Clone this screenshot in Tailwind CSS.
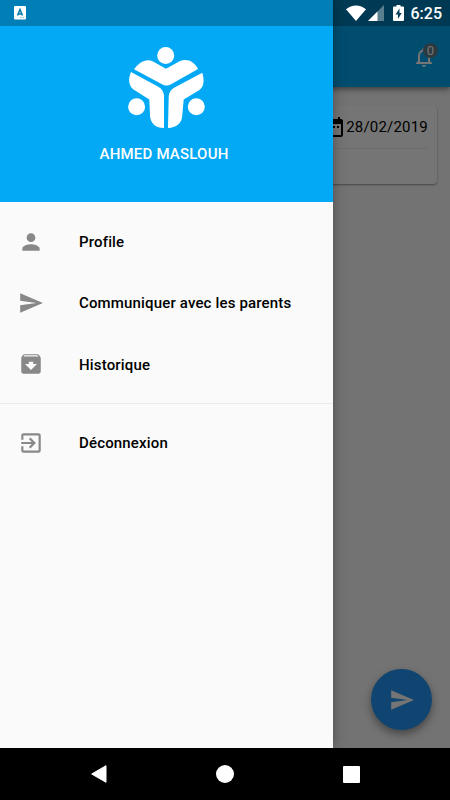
<!DOCTYPE html>
<html lang="fr">
<head>
<meta charset="utf-8">
<title>Menu</title>
<script src="https://cdn.jsdelivr.net/npm/@tailwindcss/browser@4"></script>
</head>
<body class="font-['Roboto',sans-serif]">
<div class="relative flex h-[800px] w-[450px] flex-col overflow-hidden bg-[#fafafa]">
  <!-- Home screen -->
  <header class="relative flex h-[87px] shrink-0 items-end justify-end bg-[#03a9f4] pr-[14px] pb-[18px] shadow-[0_2px_6px_rgba(0,0,0,0.5)]">
    <div class="relative size-6">
      <svg class="size-6" viewBox="0 0 24 24" fill="#fff"><path d="M12 22c1.1 0 2-.9 2-2h-4c0 1.1.9 2 2 2zm6-6v-5c0-3.07-1.63-5.64-4.5-6.32V4c0-.83-.67-1.5-1.5-1.5s-1.500.67-1.500 1.500v.68C7.640 5.360 6 7.920 6 11v5l-2 2v1h16v-1l-2-2zm-2 1H8v-6c0-2.480 1.510-4.500 4-4.500s4 2.020 4 4.500v6z"/></svg>
      <span class="absolute top-[-2px] left-[11px] flex size-[15px] items-center justify-center rounded-full bg-[#607d8b] text-[13px] leading-none text-white">0</span>
    </div>
  </header>
  <main class="flex-1 pt-[19px] pr-[13px] pl-[13px]">
    <div class="h-[78px] rounded-[4px] bg-white px-[9px] shadow-[0_1px_2px_rgba(0,0,0,0.4)]">
      <div class="flex h-[43px] items-center justify-end border-b border-[#eeeeee]">
        <svg class="size-6" viewBox="0 0 24 24" fill="#000"><path d="M9 11H7v2h2v-2zm4 0h-2v2h2v-2zm4 0h-2v2h2v-2zm2-7h-1V2h-2v2H8V2H6v2H5c-1.110 0-1.990.9-1.990 2L3 20c0 1.100.89 2 2 2h14c1.100 0 2-.9 2-2V6c0-1.100-.9-2-2-2zm0 16H5V9h14v11z"/></svg>
        <span class="pt-px text-[15px] tracking-[0.2px] text-black">28/02/2019</span>
      </div>
    </div>
  </main>
  <div class="absolute top-[669px] left-[371px] flex size-[61px] items-center justify-center rounded-full bg-[#2196f3] shadow-[0_4px_9px_rgba(0,0,0,0.4)]">
    <svg class="size-[26px]" viewBox="0 0 24 24" fill="#fff"><path d="M2.010 21L23 12 2.010 3 2 10l15 2-15 2z"/></svg>
  </div>

  <!-- Scrim -->
  <div class="absolute inset-0 bg-black/54"></div>

  <!-- Drawer -->
  <aside class="absolute top-0 left-0 flex h-[748px] w-[333px] flex-col bg-[#fafafa] shadow-[0_0_12px_rgba(0,0,0,0.35)]">
    <div class="flex h-[202px] flex-col items-center bg-[#03a9f4] pt-[46px] pr-[5px]">
      <svg class="h-[84px] w-[84px]" viewBox="-2 0 84 84" fill="#fff">
        <circle cx="41.700" cy="9.500" r="8.500"/>
        <circle cx="12.600" cy="60.800" r="8.500"/>
        <circle cx="72.300" cy="60.800" r="8.500"/>
        <path d="M10 23.300C15 16.500 22 12 29 15.500L42 22.700 56 15C63 12 70.500 15.500 74 22.900L47.500 38Q42.500 41 37.500 38Z"/>
        <path d="M7 26L34.300 40.700Q40 44 40 50.500V82C32 82 26 77.500 26 69L25.300 53.500 9.500 43.500C4.500 39.500 4 33 7 26Z"/>
        <path d="M78.300 26.700L51 41.300Q44.700 44.500 44.700 51L44 82C52 82 58.300 77 58.300 69L59.700 53.500 75.500 44C80 40.500 80.500 34 78.300 26.700Z"/>
      </svg>
      <div class="mt-[14px] text-[15px] leading-[20px] font-medium tracking-[0.2px] text-white">AHMED MASLOUH</div>
    </div>
    <nav class="flex flex-col pt-[9px] text-[15px] font-medium tracking-[0.16px] text-black">
      <a class="flex h-[61px] items-center gap-[35px] pl-[18px]">
        <svg class="size-[26px]" viewBox="0 0 24 24" fill="#888"><path d="M12 12c2.210 0 4-1.790 4-4s-1.790-4-4-4-4 1.790-4 4 1.790 4 4 4zm0 2c-2.670 0-8 1.340-8 4v2h16v-2c0-2.660-5.330-4-8-4z"/></svg>
        <span class="pt-0.5">Profile</span>
      </a>
      <a class="flex h-[61px] items-center gap-[35px] pl-[18px]">
        <svg class="size-[26px]" viewBox="0 0 24 24" fill="#888"><path d="M2.010 21L23 12 2.010 3 2 10l15 2-15 2z"/></svg>
        <span class="pt-0.5">Communiquer avec les parents</span>
      </a>
      <a class="flex h-[62px] items-center gap-[35px] pl-[18px]">
        <svg class="size-[26px]" viewBox="0 0 24 24" fill="#888"><path d="M20.540 5.230l-1.390-1.680C18.880 3.210 18.470 3 18 3H6c-.47 0-.88.21-1.160.55L3.460 5.230C3.170 5.570 3 6.020 3 6.500V19c0 1.100.9 2 2 2h14c1.100 0 2-.9 2-2V6.500c0-.48-.17-.93-.46-1.270zM12 17.500L6.500 12H10v-2h4v2h3.500L12 17.500zM5.120 5l.81-1h12l.94 1H5.120z"/></svg>
        <span class="pt-0.5">Historique</span>
      </a>
      <div class="mt-[8px] mb-[8px] h-px bg-[#ebebeb]"></div>
      <a class="flex h-[61px] items-center gap-[35px] pl-[18px]">
        <svg class="size-[26px]" viewBox="0 0 24 24" fill="#888"><path d="M10.090 15.590L11.500 17l5-5-5-5-1.410 1.410L12.670 11H3v2h9.670l-2.580 2.590zM19 3H5c-1.110 0-2 .9-2 2v4h2V5h14v14H5v-4H3v4c0 1.100.89 2 2 2h14c1.100 0 2-.9 2-2V5c0-1.100-.9-2-2-2z"/></svg>
        <span class="pt-0.5">Déconnexion</span>
      </a>
    </nav>
  </aside>

  <!-- Status bar -->
  <div class="absolute inset-x-0 top-0 flex h-[26px] items-center bg-black/25 pr-[9px] pl-[14px]">
    <svg class="h-[14px] w-[12px]" viewBox="0 0 12 14"><rect width="12" height="13.500" rx="1" fill="#fff"/><path d="M3.500 9.500L6 3.500l2.500 6M4.300 8h3.400" fill="none" stroke="#0277a8" stroke-width="1.500"/><path d="M6 11.500h4" stroke="#9cc9df" stroke-width="1.500" stroke-dasharray="1 .5"/></svg>
    <div class="ml-auto flex items-center">
      <svg class="h-[16px] w-[20px]" viewBox="0 0 20 16" fill="#fff"><path d="M10 16L0 4.200C5.500-.9 14.500-.9 20 4.200z"/></svg>
      <svg class="ml-[2px] h-[16px] w-[16px]" viewBox="0 0 16 16" fill="#fff"><path d="M0 16L16 0v16z" fill-opacity=".35"/><path d="M0 16L9.500 6.500V16z"/></svg>
      <svg class="ml-[9px] h-[16px] w-[11px]" viewBox="0 0 11 16"><path d="M3.500 0h4v1.500H10q1 0 1 1V15q0 1-1 1H1q-1 0-1-1V2.500q0-1 1-1h2.500z" fill="#fff"/><path d="M6.500 3.500L2.500 9.500H5V14l3.700-6H6.500z" fill="#033f5a"/></svg>
      <span class="ml-[7px] pt-0.5 text-[16px] leading-[20px] font-medium text-white -mr-px">6:25</span>
    </div>
  </div>

  <!-- Navigation bar -->
  <div class="absolute inset-x-0 bottom-0 flex h-[52px] items-center bg-black pl-[91px]">
    <svg class="h-[18px] w-[16px]" viewBox="0 0 16 18" fill="#fff" stroke="#fff" stroke-width="1" stroke-linejoin="round"><path d="M.7 9L15 .7v16.600z"/></svg>
    <div class="ml-[109px] size-[18px] rounded-full bg-white"></div>
    <div class="ml-[109px] h-[17px] w-[17px] rounded-[1px] bg-white"></div>
  </div>
</div>
</body>
</html>
